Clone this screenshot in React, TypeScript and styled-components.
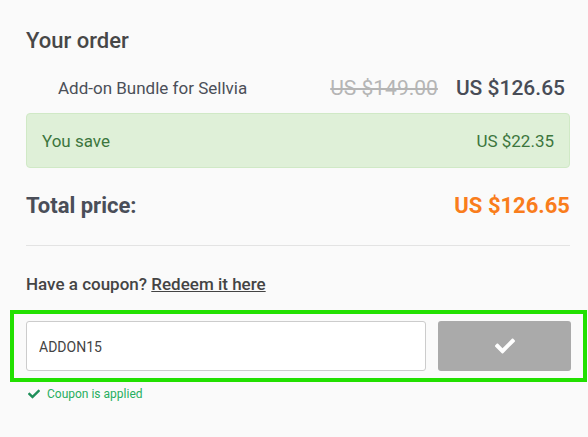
import React from "react";
import styled, { createGlobalStyle } from "styled-components";
import { FaCheck } from "react-icons/fa";

const Global = createGlobalStyle`
  html, body { margin: 0; padding: 0; background: #fafafa; }
  body { font-family: Roboto, "Liberation Sans", sans-serif; }
`;

const Page = styled.div`
  width: 588px;
  height: 437px;
  box-sizing: border-box;
  padding: 27px 18px 0 26px;
  color: #454a54;
`;

const Title = styled.h2`
  margin: 0;
  font-size: 22px;
  font-weight: 500;
  line-height: 28px;
  color: #474747;
`;

const ItemRow = styled.div`
  display: flex;
  align-items: center;
  margin-top: 18px;
  height: 30px;
  padding: 0 5px 0 32px;
`;

const ItemName = styled.div`
  flex: 1;
  font-size: 17px;
  color: #4b4f58;
`;

const OldPrice = styled.span`
  font-size: 21px;
  color: #b5b5b5;
  text-decoration: line-through;
  margin-right: 18px;
`;

const NewPrice = styled.span`
  font-size: 21px;
  font-weight: 500;
  color: #484c56;
`;

const SaveBox = styled.div`
  margin-top: 10px;
  height: 55px;
  box-sizing: border-box;
  display: flex;
  align-items: center;
  justify-content: space-between;
  padding: 1px 15px 0 15px;
  background: #dff0d8;
  border: 1px solid #d0e9c6;
  border-radius: 4px;
  color: #3c763d;
  font-size: 17px;
`;

const TotalRow = styled.div`
  display: flex;
  align-items: center;
  justify-content: space-between;
  margin-top: 20px;
  height: 34px;
  font-size: 22px;
  font-weight: 700;
`;

const TotalLabel = styled.span`
  color: #4a4e58;
`;

const TotalValue = styled.span`
  color: #f97d1c;
`;

const Divider = styled.hr`
  margin: 23px 0 0;
  border: 0;
  border-top: 1px solid #e3e3e3;
`;

const CouponPrompt = styled.div`
  margin-top: 28px;
  font-size: 17px;
  font-weight: 500;
  color: #444;
  line-height: 20px;
`;

const RedeemLink = styled.a`
  color: #444;
  text-decoration: underline;
  cursor: pointer;
`;

const Highlight = styled.div`
  margin: 16px -17px 0 -16px;
  border: 4px solid #22e000;
  padding: 7px 12px 7px 12px;
  display: flex;
  gap: 12px;
`;

const CouponInput = styled.input`
  flex: 1;
  height: 50px;
  box-sizing: border-box;
  border: 1px solid #cccccc;
  border-radius: 3px;
  background: #fff;
  padding: 2px 12px 0;
  font-family: Roboto, "Liberation Sans", sans-serif;
  font-size: 14px;
  color: #444;
  outline: none;
`;

const ApplyButton = styled.button`
  width: 133px;
  height: 50px;
  border: 0;
  border-radius: 3px;
  background: #aaaaaa;
  display: flex;
  align-items: center;
  justify-content: center;
  color: #ffffff;
  cursor: pointer;
`;

const Applied = styled.div`
  display: flex;
  align-items: center;
  gap: 7px;
  margin-top: 5px;
  margin-left: 2px;
  font-size: 12px;
  color: #27ae60;
`;

const AppliedIcon = styled.span`
  display: flex;
  color: #1f8f5a;
`;

export default function App() {
  return (
    <Page>
      <Global />
      <Title>Your order</Title>
      <ItemRow>
        <ItemName>Add-on Bundle for Sellvia</ItemName>
        <OldPrice>US $149.00</OldPrice>
        <NewPrice>US $126.65</NewPrice>
      </ItemRow>
      <SaveBox>
        <span>You save</span>
        <span>US $22.35</span>
      </SaveBox>
      <TotalRow>
        <TotalLabel>Total price:</TotalLabel>
        <TotalValue>US $126.65</TotalValue>
      </TotalRow>
      <Divider />
      <CouponPrompt>
        Have a coupon? <RedeemLink>Redeem it here</RedeemLink>
      </CouponPrompt>
      <Highlight>
        <CouponInput defaultValue="ADDON15" />
        <ApplyButton>
          <FaCheck size={20} />
        </ApplyButton>
      </Highlight>
      <Applied>
        <AppliedIcon>
          <FaCheck size={12} />
        </AppliedIcon>
        <span>Coupon is applied</span>
      </Applied>
    </Page>
  );
}
